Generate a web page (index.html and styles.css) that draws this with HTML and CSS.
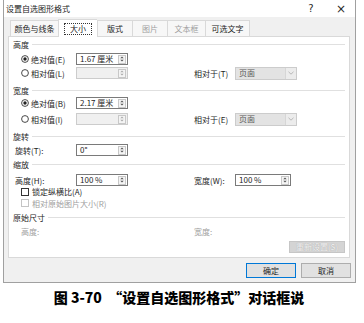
FILE: index.html
```
<!DOCTYPE html>
<html lang="zh">
<head>
<meta charset="utf-8">
<link rel="stylesheet" href="styles.css">
</head>
<body>
<div class="dialog">
  <div class="titlebar">
    <span class="title">设置自选图形格式</span>
    <span class="help">?</span>
    <span class="close">×</span>
  </div>
  <div class="tabs">
    <div class="tab t1">颜色与线条</div>
    <div class="tab t2 sel"><span class="focus">大小</span></div>
    <div class="tab t3">版式</div>
    <div class="tab t4 dis">图片</div>
    <div class="tab t5 dis">文本框</div>
    <div class="tab t6">可选文字</div>
  </div>
  <div class="panel">
    <div class="hdr h1"><span>高度</span><i class="rule"></i></div>
    <div class="row r1">
      <div class="c1"><svg class="rad" width="8" height="8" viewBox="0 0 8 8"><circle cx="4" cy="4" r="3.4" fill="#fff" stroke="#333" stroke-width="0.9"/><circle cx="4" cy="4" r="1.7" fill="#222"/></svg><span>绝对值(E)</span></div>
      <div class="box"><span class="val">1.67 厘米</span><span class="spin"><svg width="7" height="8" viewBox="0 0 7 8"><path d="M1.5 3.2L3.5 1.2L5.5 3.2Z M1.5 4.8L3.5 6.8L5.5 4.8Z" fill="#555"/></svg></span></div>
    </div>
    <div class="row r2">
      <div class="c1"><svg class="rad" width="8" height="8" viewBox="0 0 8 8"><circle cx="4" cy="4" r="3.4" fill="#fff" stroke="#333" stroke-width="0.9"/></svg><span>相对值(L)</span></div>
      <div class="box off"><span class="val"></span><span class="spin"><svg width="7" height="8" viewBox="0 0 7 8"><path d="M1.5 3.2L3.5 1.2L5.5 3.2Z M1.5 4.8L3.5 6.8L5.5 4.8Z" fill="#aaa"/></svg></span></div>
      <div class="gap"></div>
      <div class="c3">相对于(T)</div>
      <div class="drop"><span class="val">页面</span><span class="arr"><svg width="6" height="4" viewBox="0 0 6 4"><path d="M0.5 0.8L3 3.2L5.5 0.8" stroke="#aaa" stroke-width="0.8" fill="none"/></svg></span></div>
    </div>
    <div class="hdr h2"><span>宽度</span><i class="rule"></i></div>
    <div class="row r3">
      <div class="c1"><svg class="rad" width="8" height="8" viewBox="0 0 8 8"><circle cx="4" cy="4" r="3.4" fill="#fff" stroke="#333" stroke-width="0.9"/><circle cx="4" cy="4" r="1.7" fill="#222"/></svg><span>绝对值(B)</span></div>
      <div class="box"><span class="val">2.17 厘米</span><span class="spin"><svg width="7" height="8" viewBox="0 0 7 8"><path d="M1.5 3.2L3.5 1.2L5.5 3.2Z M1.5 4.8L3.5 6.8L5.5 4.8Z" fill="#555"/></svg></span></div>
    </div>
    <div class="row r4">
      <div class="c1"><svg class="rad" width="8" height="8" viewBox="0 0 8 8"><circle cx="4" cy="4" r="3.4" fill="#fff" stroke="#333" stroke-width="0.9"/></svg><span>相对值(I)</span></div>
      <div class="box off"><span class="val"></span><span class="spin"><svg width="7" height="8" viewBox="0 0 7 8"><path d="M1.5 3.2L3.5 1.2L5.5 3.2Z M1.5 4.8L3.5 6.8L5.5 4.8Z" fill="#aaa"/></svg></span></div>
      <div class="gap"></div>
      <div class="c3">相对于(E)</div>
      <div class="drop"><span class="val">页面</span><span class="arr"><svg width="6" height="4" viewBox="0 0 6 4"><path d="M0.5 0.8L3 3.2L5.5 0.8" stroke="#aaa" stroke-width="0.8" fill="none"/></svg></span></div>
    </div>
    <div class="hdr h3"><span>旋转</span><i class="rule"></i></div>
    <div class="row r5">
      <div class="c1 plain">旋转(T):</div>
      <div class="box"><span class="val">0°</span><span class="spin"><svg width="7" height="8" viewBox="0 0 7 8"><path d="M1.5 3.2L3.5 1.2L5.5 3.2Z M1.5 4.8L3.5 6.8L5.5 4.8Z" fill="#555"/></svg></span></div>
    </div>
    <div class="hdr h4"><span>缩放</span><i class="rule"></i></div>
    <div class="row r6">
      <div class="c1 plain">高度(H):</div>
      <div class="box"><span class="val">100 %</span><span class="spin"><svg width="7" height="8" viewBox="0 0 7 8"><path d="M1.5 3.2L3.5 1.2L5.5 3.2Z M1.5 4.8L3.5 6.8L5.5 4.8Z" fill="#555"/></svg></span></div>
      <div class="gap"></div>
      <div class="c3">宽度(W):</div>
      <div class="box wide"><span class="val">100 %</span><span class="spin"><svg width="7" height="8" viewBox="0 0 7 8"><path d="M1.5 3.2L3.5 1.2L5.5 3.2Z M1.5 4.8L3.5 6.8L5.5 4.8Z" fill="#555"/></svg></span></div>
    </div>
    <div class="row cb cb1">
      <span class="chk"></span><span>锁定纵横比(A)</span>
    </div>
    <div class="row cb cb2 dis">
      <span class="chk"></span><span>相对原始图片大小(R)</span>
    </div>
    <div class="hdr h5"><span>原始尺寸</span><i class="rule"></i></div>
    <div class="row r7 dis">
      <div class="c1 orig">高度:</div>
      <div class="spacer"></div>
      <div class="c3">宽度:</div>
    </div>
    <div class="resetrow"><span class="btn reset">重新设置(S)</span></div>
  </div>
  <div class="footer">
    <span class="btn ok">确定</span>
    <span class="btn">取消</span>
  </div>
</div>
<div class="caption">图 3-70&nbsp;&nbsp;<span class="q ql">“</span>设置自选图形格式<span class="q qr">”</span>对话框说</div>
</body>
</html>
```
FILE: styles.css
```
html, body {
  margin: 0;
  padding: 0;
  background: #fff;
}
body {
  width: 364px;
  height: 323px;
  overflow: hidden;
  font-family: "Noto Sans CJK SC", "Noto Sans", sans-serif;
  font-size: 8px;
  color: #1e1e1e;
  padding-left: 3px;
  box-sizing: border-box;
}
.dialog {
  width: 353px;
  height: 283px;
  box-sizing: border-box;
  border: 1px solid #a0a0a0;
  border-top: none;
  background: #f0f0f0;
  display: flex;
  flex-direction: column;
}
.titlebar {
  height: 17px;
  flex: none;
  background: #fff;
  display: grid;
  grid-template-columns: 1fr 10px 10px;
  column-gap: 20px;
  align-items: center;
  padding-left: 2px;
  padding-right: 9px;
  font-size: 8px;
  color: #222;
}
.help {
  text-align: center;
  font-family: "DejaVu Sans", sans-serif;
  font-size: 10px;
  line-height: 12px;
  color: #2a2a2a;
}
.close {
  text-align: center;
  font-family: "DejaVu Sans", sans-serif;
  font-size: 12px;
  line-height: 12px;
  color: #2a2a2a;
}
.tabs {
  height: 19px;
  flex: none;
  display: flex;
  align-items: flex-end;
  padding-left: 6px;
  position: relative;
  z-index: 1;
}
.tab {
  height: 16px;
  box-sizing: border-box;
  border: 1px solid #d9d9d9;
  border-bottom: none;
  border-right: none;
  background: #f7f7f7;
  display: flex;
  align-items: center;
  justify-content: center;
  color: #222;
  line-height: 1;
}
.tab.t6 { border-right: 1px solid #d9d9d9; }
.t1 { width: 48px; }
.t2 { width: 39px; }
.t3 { width: 35px; }
.t4 { width: 35px; }
.t5 { width: 38px; }
.t6 { width: 45px; }
.tab.sel {
  background: #fff;
  height: 18px;
  margin-bottom: -1px;
}
.focus {
  border: 1px dotted #333;
  padding: 1px 5px;
  line-height: 8px;
}
.tab.dis { color: #a0a0a0; }
.panel {
  margin-left: 4px;
  width: 342px;
  height: 222px;
  flex: none;
  box-sizing: border-box;
  border: 1px solid #d9d9d9;
  background: #fff;
  display: flex;
  flex-direction: column;
}
.hdr {
  height: 12px;
  display: flex;
  align-items: center;
  padding-left: 4px;
  padding-right: 4px;
  color: #1e1e1e;
}
.rule {
  flex: 1;
  height: 1px;
  background: #e0e0e0;
  margin-left: 3px;
}
.h1 { margin-top: 1px; }
.h2 { margin-top: 4px; }
.h3 { margin-top: 4px; }
.h4 { margin-top: 1px; }
.h5 { margin-top: 2px; }
.row {
  display: flex;
  align-items: center;
  height: 14px;
}
.r1 { margin-top: 2px; }
.r3 { margin-top: 0; }
.r4 { margin-top: 2px; }
.r5 { margin-top: 1px; }
.r6 { margin-top: 4px; height: 12px; }
.r7 { margin-top: 2px; height: 12px; }
.c1 {
  width: 67px;
  box-sizing: border-box;
  padding-left: 12px;
  display: flex;
  align-items: center;
  gap: 2px;
}
.c1.plain { padding-left: 6px; }
.c1.orig { padding-left: 12px; }
.rad { flex: none; }
.box {
  width: 52px;
  height: 12px;
  box-sizing: border-box;
  border: 1px solid #7a7a7a;
  display: flex;
  align-items: center;
  background: #fff;
}
.box.wide { width: 56px; }
.box.off { border-color: #cccccc; background: #f0f0f0; }
.val {
  flex: 1;
  padding-left: 3px;
  line-height: 1;
  white-space: nowrap;
}
.spin {
  width: 8px;
  height: 9px;
  margin-right: 1px;
  box-sizing: border-box;
  border: 1px solid #c8c8c8;
  display: flex;
  align-items: center;
  justify-content: center;
  background: #f4f4f4;
}
.spin svg { display: block; }
.gap { width: 66px; }
.spacer { width: 118px; }
.c3 { width: 41px; white-space: nowrap; }
.drop {
  width: 62px;
  height: 13px;
  box-sizing: border-box;
  border: 1px solid #cccccc;
  background: #e3e3e3;
  display: flex;
  align-items: center;
  color: #5a5a5a;
}
.arr {
  width: 10px;
  height: 11px;
  background: #ececec;
  border-left: 1px solid #d6d6d6;
  display: flex;
  align-items: center;
  justify-content: center;
}
.cb {
  padding-left: 12px;
  gap: 3px;
}
.cb1 { height: 11px; }
.cb2 { height: 12px; }
.chk {
  width: 8px;
  height: 8px;
  box-sizing: border-box;
  border: 1px solid #333;
  background: #fff;
  flex: none;
}
.dis { color: #a0a0a0; }
.dis .chk { border-color: #c4c4c4; }
.resetrow {
  margin-top: 4px;
  display: flex;
  justify-content: flex-end;
  padding-right: 4px;
}
.btn {
  width: 50px;
  height: 15px;
  box-sizing: border-box;
  border: 1px solid #adadad;
  background: #e1e1e1;
  display: flex;
  align-items: center;
  justify-content: center;
  line-height: 1;
  color: #1e1e1e;
}
.btn.reset {
  width: 56px;
  height: 12px;
  background: #d4d4d4;
  border-color: #c6c6c6;
  color: #f2f2f2;
  text-shadow: 0 0 1px #9a9a9a;
}
.btn.ok { border: 1px solid #0078d7; }
.footer {
  display: flex;
  justify-content: flex-end;
  gap: 5px;
  padding-top: 5px;
  padding-right: 4px;
}
.caption {
  margin-top: 5px;
  width: 352px;
  text-align: center;
  font-size: 14px;
  line-height: 18px;
  font-weight: 900;
  color: #000;
  white-space: nowrap;
}
.q {
  display: inline-block;
  width: 14px;
}
.ql { text-align: right; }
.qr { text-align: left; }
```
